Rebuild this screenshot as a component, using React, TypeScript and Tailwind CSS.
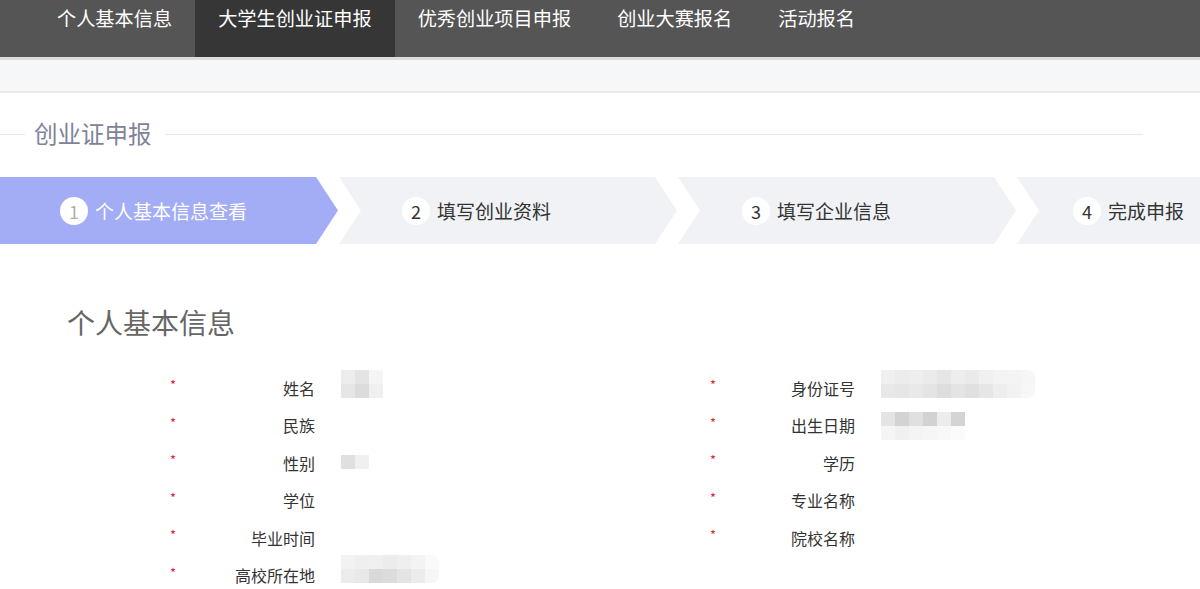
import React from "react"

const font = "font-['Microsoft_YaHei','Noto_Sans_CJK_SC','Noto_Sans',sans-serif]"

const navItems = ["个人基本信息", "大学生创业证申报", "优秀创业项目申报", "创业大赛报名", "活动报名"]

const steps = [
  { n: 1, label: "个人基本信息查看", pad: "pl-[60px]" },
  { n: 2, label: "填写创业资料", pad: "pl-[63px]" },
  { n: 3, label: "填写企业信息", pad: "pl-[64px]" },
  { n: 4, label: "完成申报", pad: "pl-[56px]" },
]

type Mosaic = { rows: string[][]; offset: string; rounded?: boolean }

const leftRows: { label: string; value?: Mosaic }[] = [
  {
    label: "姓名",
    value: {
      offset: "mt-[1px]",
      rows: [
        ["bg-[#ededed]", "bg-[#e4e4e4]", "bg-[#f5f5f5]"],
        ["bg-[#e6e6e6]", "bg-[#dcdcdc]", "bg-[#f0f0f0]"],
      ],
    },
  },
  { label: "民族" },
  { label: "性别", value: { offset: "mt-[11px]", rows: [["bg-[#e0e0e0]", "bg-[#f0f0f0]"]] } },
  { label: "学位" },
  { label: "毕业时间" },
  {
    label: "高校所在地",
    value: {
      offset: "-mt-[2px]",
      rounded: true,
      rows: [
        ["bg-[#f2f2f2]", "bg-[#efefef]", "bg-[#f0f0f0]", "bg-[#ececec]", "bg-[#efefef]", "bg-[#f3f3f3]", "bg-[#fafafa]"],
        ["bg-[#ececec]", "bg-[#e8e8e8]", "bg-[#d9d9d9]", "bg-[#dcdcdc]", "bg-[#e4e4e4]", "bg-[#ececec]", "bg-[#f6f6f6]"],
      ],
    },
  },
]

const rightRows: { label: string; value?: Mosaic }[] = [
  {
    label: "身份证号",
    value: {
      offset: "mt-[1px]",
      rounded: true,
      rows: [
        ["bg-[#f0f0f0]", "bg-[#ececec]", "bg-[#eeeeee]", "bg-[#ebebeb]", "bg-[#e6e6e6]", "bg-[#ededed]", "bg-[#eaeaea]", "bg-[#f0f0f0]", "bg-[#f3f3f3]", "bg-[#f4f4f4]", "bg-[#f6f6f6]"],
        ["bg-[#e8e8e8]", "bg-[#e6e6e6]", "bg-[#e9e9e9]", "bg-[#e4e4e4]", "bg-[#dddddd]", "bg-[#e4e4e4]", "bg-[#e0e0e0]", "bg-[#e6e6e6]", "bg-[#eeeeee]", "bg-[#f2f2f2]", "bg-[#f7f7f7]"],
      ],
    },
  },
  {
    label: "出生日期",
    value: {
      offset: "mt-[5px]",
      rows: [
        ["bg-[#e4e4e4]", "bg-[#d3d3d3]", "bg-[#e0e0e0]", "bg-[#d2d2d2]", "bg-[#ececec]", "bg-[#d4d4d4]"],
        ["bg-[#f5f5f5]", "bg-[#f0f0f0]", "bg-[#f4f4f4]", "bg-[#f6f6f6]", "bg-[#f8f8f8]", "bg-[#fbfbfb]"],
      ],
    },
  },
  { label: "学历" },
  { label: "专业名称" },
  { label: "院校名称" },
]

function MosaicBlock({ m }: { m: Mosaic }) {
  return (
    <div className={`self-start ${m.offset} flex flex-col overflow-hidden ${m.rounded ? "rounded-r-[8px]" : ""}`}>
      {m.rows.map((row, i) => (
        <div key={i} className="flex">
          {row.map((c, j) => (
            <div key={j} className={`w-[14px] h-[14px] ${c}`} />
          ))}
        </div>
      ))}
    </div>
  )
}

function FormColumn({ rows }: { rows: { label: string; value?: Mosaic }[] }) {
  return (
    <div className="w-[540px] shrink-0 flex flex-col">
      {rows.map((r) => (
        <div key={r.label} className="h-[37.5px] flex items-center">
          <span className="self-start mt-[9px] w-[10px] text-[13px] leading-none text-[#e0283c]">*</span>
          <span className="w-[135px] text-right text-[16px] leading-none text-[#333]">{r.label}</span>
          <div className="ml-[26px] h-full flex">{r.value && <MosaicBlock m={r.value} />}</div>
        </div>
      ))}
    </div>
  )
}

export default function App() {
  return (
    <div className={`w-[1200px] h-[589px] overflow-hidden bg-white ${font}`}>
      <nav className="h-[60px] bg-[#555555] border-b-[3px] border-[#dcdcdc] flex pl-[34px]">
        {navItems.map((item, i) => (
          <div
            key={item}
            className={`h-[57px] px-[23px] text-[19.2px] leading-[36px] text-white ${i === 1 ? "bg-[#363636]" : ""}`}
          >
            {item}
          </div>
        ))}
      </nav>
      <div className="h-[33px] bg-[#f6f7f9] border-b-2 border-[#ebebeb]" />

      <div className="mt-[28px] h-[26px] flex items-center">
        <div className="w-[25px] h-px bg-[#e6e6e6]" />
        <span className="ml-[9px] text-[23.5px] leading-none text-[#7e8397]">创业证申报</span>
        <div className="ml-[13px] w-[978px] h-px bg-[#e8e8e8]" />
      </div>

      <div className="mt-[30px] h-[67px] flex gap-[1px]">
        {steps.map((s, i) => {
          const active = i === 0
          const shape =
            i === 0
              ? "[clip-path:polygon(0_0,calc(100%-22px)_0,100%_50%,calc(100%-22px)_100%,0_100%)]"
              : "[clip-path:polygon(0_0,calc(100%-22px)_0,100%_50%,calc(100%-22px)_100%,0_100%,22px_50%)]"
          return (
            <div
              key={s.n}
              className={`shrink-0 w-[338px] h-full flex items-center ${s.pad} ${shape} ${
                active ? "bg-[#a3adf5]" : "bg-[#f0f2f5]"
              }`}
            >
              <span
                className={`w-[28px] h-[28px] rounded-full bg-white flex items-center justify-center text-[18px] leading-none ${
                  active ? "text-[#b0b0b0]" : "text-[#333]"
                }`}
              >
                {s.n}
              </span>
              <span className={`ml-[7px] text-[19px] leading-none ${active ? "text-white" : "text-[#333]"}`}>
                {s.label}
              </span>
            </div>
          )
        })}
      </div>

      <h2 className="mt-[61px] pl-[67px] text-[28px] leading-[34px] text-[#666] font-normal">个人基本信息</h2>

      <div className="mt-[30px] pl-[170px] flex">
        <FormColumn rows={leftRows} />
        <FormColumn rows={rightRows} />
      </div>
    </div>
  )
}
